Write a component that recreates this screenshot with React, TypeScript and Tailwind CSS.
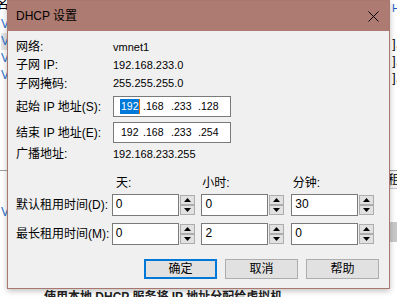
const font = "font-['Liberation_Sans','Noto_Sans_CJK_SC',sans-serif]"

const segWidths = ['w-[23px]', 'w-[25px]', 'w-[24px]', 'w-[20px]']

function IpBox({ parts, selected }: { parts: string[]; selected?: boolean }) {
  return (
    <div className="flex h-[21px] w-[118px] items-center border border-[#7a7a7a] bg-white pl-[6px] text-[10.5px] text-black">
      {parts.map((p, i) => (
        <div key={i} className="flex items-center">
          {i > 0 && <span className="w-[3px]">.</span>}
          <span className={`flex items-center ${segWidths[i]}`}>
            {i === 0 && selected ? (
              <>
                <span className="bg-[#0078d7] pl-[1px] leading-[15px] text-white">{p}</span>
                <span className="h-[15px] w-[1px] bg-[#f07800]" />
              </>
            ) : (
              <span className={i === 0 ? 'pl-[1px]' : ''}>{p}</span>
            )}
          </span>
        </div>
      ))}
    </div>
  )
}

function Arrow({ up }: { up?: boolean }) {
  return (
    <div className="flex h-[10px] w-[15px] items-center justify-center border border-[#adadad] bg-[#e1e1e1]">
      <svg width="7" height="4" viewBox="0 0 7 4">
        <path d={up ? 'M0 4 L3.5 0 L7 4 Z' : 'M0 0 L3.5 4 L7 0 Z'} fill="#000" />
      </svg>
    </div>
  )
}

function Spin({ value }: { value: string }) {
  return (
    <div className="flex w-[91px] gap-[1px]">
      <div className="h-[22px] w-[67px] border border-[#7a7a7a] bg-white pl-[3px] pt-[2px] text-[12px] leading-[14px]">
        {value}
      </div>
      <div className="flex flex-col justify-between py-[1px]">
        <Arrow up />
        <Arrow />
      </div>
    </div>
  )
}

function Btn({ label, primary }: { label: string; primary?: boolean }) {
  return (
    <div
      className={
        primary
          ? 'flex h-[20px] w-[73px] items-center justify-center border-2 border-[#0078d7] bg-[#e1e1e1] text-[12px]'
          : 'flex h-[20px] w-[73px] items-center justify-center border border-[#adadad] bg-[#e1e1e1] text-[12px]'
      }
    >
      {label}
    </div>
  )
}

export default function App() {
  return (
    <div className={`relative h-[297px] w-[397px] overflow-hidden bg-white text-black ${font}`}>
      {/* window behind the dialog */}
      <div className="absolute left-[-4px] top-[-6px] text-[13px]">名</div>
      <div className="absolute left-[1px] top-[16px] flex flex-col text-[12px] leading-[17px] text-[#2a6fc9]">
        <span>V</span>
        <span className="bg-[#e5e5e5]">V</span>
        <span>V</span>
        <span>V</span>
      </div>
      <div className="absolute left-0 top-[170px] h-[1px] w-[397px] bg-[#a0a0a0]" />
      <div className="absolute left-[1px] top-[203px] text-[12px] text-[#2a6fc9]">V</div>
      <div className="absolute right-[-3px] top-[0px] text-[11px] text-[#1b5fbf]">H</div>
      <div className="absolute right-[-2px] top-[36px] flex flex-col text-[12px] leading-[17px]">
        <span>],</span>
        <span>],</span>
        <span>],</span>
      </div>
      <div className="absolute right-0 top-[171px] h-[18px] w-[10px] overflow-hidden border-b border-[#c8c8c8] bg-[#f5f5f5] pl-[1px] text-[12px]">租</div>
      <div className="absolute right-0 top-[222px] h-[20px] w-[10px] bg-[#c9c9c9]" />
      <div className="absolute left-[44px] top-[290px] whitespace-nowrap text-[12px] font-bold leading-[14px] text-[#222]">
        使用本地 DHCP 服务将 IP 地址分配给虚拟机
      </div>

      {/* dialog */}
      <div className="absolute left-[7px] top-0 flex h-[289px] w-[383px] flex-col border border-[#a8776e] bg-[#f0f0f0] shadow-[0_2px_6px_rgba(0,0,0,0.25)]">
        <div className="flex h-[30px] items-center justify-between bg-[#ae7b72] pl-[8px] pr-[10px] text-[12px]">
          <span>DHCP 设置</span>
          <svg width="11" height="11" viewBox="0 0 11 11">
            <path d="M0.5 0.5 L10.5 10.5 M10.5 0.5 L0.5 10.5" stroke="#000" strokeWidth="1" />
          </svg>
        </div>

        <div className="flex flex-col px-[8px] pt-[7px] text-[12px]">
          <div className="flex h-[18px] items-center">
            <span className="w-[97px]">网络:</span>
            <span className="text-[11px]">vmnet1</span>
          </div>
          <div className="flex h-[18px] items-center">
            <span className="w-[97px]">子网 IP:</span>
            <span className="text-[11px]">192.168.233.0</span>
          </div>
          <div className="flex h-[19px] items-center">
            <span className="w-[97px]">子网掩码:</span>
            <span className="text-[11px]">255.255.255.0</span>
          </div>
          <div className="mt-[3px] flex h-[21px] items-center">
            <span className="w-[97px]">起始 IP 地址(S):</span>
            <IpBox parts={['192', '168', '233', '128']} selected />
          </div>
          <div className="mt-[5px] flex h-[21px] items-center">
            <span className="w-[97px]">结束 IP 地址(E):</span>
            <IpBox parts={['192', '168', '233', '254']} />
          </div>
          <div className="mt-[2px] flex h-[18px] items-center">
            <span className="w-[97px]">广播地址:</span>
            <span className="text-[11px]">192.168.233.255</span>
          </div>
          <div className="mt-[11px] flex h-[17px] items-center pl-[97px]">
            <span className="w-[91px] pl-[3px]">天:</span>
            <span className="w-[91px]">小时:</span>
            <span className="w-[91px] pl-[1px]">分钟:</span>
          </div>
          <div className="mt-[3px] flex items-center">
            <span className="w-[97px]">默认租用时间(D):</span>
            <Spin value="0" />
            <Spin value="0" />
            <Spin value="30" />
          </div>
          <div className="mt-[7px] flex items-center">
            <span className="w-[97px]">最长租用时间(M):</span>
            <Spin value="0" />
            <Spin value="2" />
            <Spin value="0" />
          </div>
          <div className="mt-[14px] flex justify-end gap-[8px] pr-[2px]">
            <Btn label="确定" primary />
            <Btn label="取消" />
            <Btn label="帮助" />
          </div>
        </div>
      </div>
    </div>
  )
}
